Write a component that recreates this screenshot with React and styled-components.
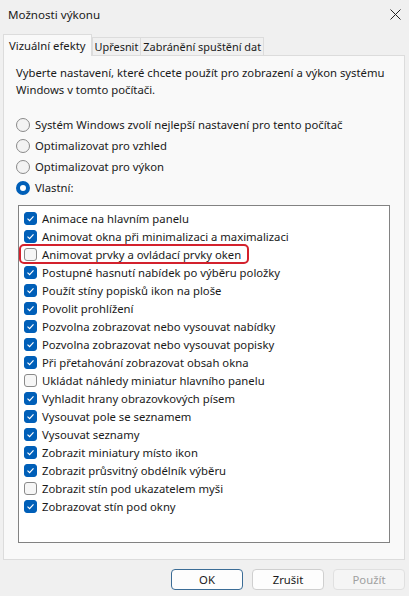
import React from 'react'
import styled, { createGlobalStyle } from 'styled-components'

const GlobalStyle = createGlobalStyle`
  html, body {
    margin: 0;
    padding: 0;
    background: #f0f0f0;
  }
  body {
    font-family: "Noto Sans", "Open Sans", sans-serif;
    font-size: 11.3px;
    color: #1a1a1a;
  }
`

const Window = styled.div`
  width: 409px;
  height: 596px;
  background: #f0f0f0;
  display: flex;
  flex-direction: column;
  box-sizing: border-box;
`

const TitleBar = styled.div`
  height: 29px;
  display: flex;
  align-items: center;
  justify-content: space-between;
  padding: 0 6px 0 8px;
  font-size: 11.6px;
`

const Close = styled.div`
  width: 16px;
  height: 16px;
  display: flex;
  align-items: center;
  justify-content: center;
`

const Tabs = styled.div`
  display: flex;
  align-items: flex-end;
  height: 26px;
  padding-left: 3px;
`

const Tab = styled.div`
  height: ${p => (p.active ? '21px' : '17px')};
  padding: 0 ${p => (p.active ? '5px' : '2px')};
  display: flex;
  align-items: center;
  background: ${p => (p.active ? '#f9f9f9' : '#f0f0f0')};
  border: 1px solid #dcdcdc;
  border-bottom: none;
  margin-right: ${p => (p.active ? '0' : '-1px')};
  position: relative;
  z-index: ${p => (p.active ? 2 : 1)};
  margin-bottom: ${p => (p.active ? '-1px' : '0')};
  white-space: nowrap;
  font-size: ${p => (p.active ? '11.3px' : '10.9px')};
`

const Panel = styled.div`
  margin: 0 4px 0 3px;
  height: 505px;
  background: #f9f9f9;
  border: 1px solid #dcdcdc;
  box-sizing: border-box;
  padding: 8px 13px 0 12px;
  display: flex;
  flex-direction: column;
`

const Intro = styled.p`
  margin: 0;
  line-height: 17px;
`

const RadioGroup = styled.div`
  margin-top: 18px;
  display: flex;
  flex-direction: column;
  gap: 4px;
`

const RadioRow = styled.div`
  display: flex;
  align-items: center;
  height: 17px;
  gap: 5px;
`

const RadioDot = styled.span`
  width: 14px;
  height: 14px;
  border-radius: 50%;
  box-sizing: border-box;
  flex-shrink: 0;
  border: ${p => (p.checked ? '4px solid #005fb8' : '1px solid #8a8a8a')};
  background: ${p => (p.checked ? '#fff' : '#f3f3f3')};
`

const ListBox = styled.div`
  margin: 9px 1px 0 2px;
  height: 338px;
  background: #fff;
  border: 1px solid #828282;
  box-sizing: border-box;
  padding: 3px 0 0 5px;
  display: flex;
  flex-direction: column;
`

const Item = styled.div`
  display: flex;
  align-items: center;
  height: 18px;
  gap: 5px;
  position: relative;
`

const Highlight = styled.span`
  position: absolute;
  left: -5px;
  top: -1px;
  width: 230px;
  height: 20px;
  border: 2px solid #d3212d;
  border-radius: 5px;
  box-sizing: border-box;
`

const Box = styled.span`
  width: 13px;
  height: 13px;
  border-radius: 3px;
  box-sizing: border-box;
  flex-shrink: 0;
  display: flex;
  align-items: center;
  justify-content: center;
  background: ${p => (p.checked ? '#005fb8' : '#f6f6f6')};
  border: 1px solid ${p => (p.checked ? '#005fb8' : '#8a8a8a')};
`

const Footer = styled.div`
  flex: 1;
  display: flex;
  justify-content: flex-end;
  align-items: center;
  gap: 9px;
  padding: 3px 4px 0 0;
`

const Button = styled.button`
  width: 72px;
  height: 21px;
  font-family: inherit;
  font-size: 11.3px;
  border-radius: 4px;
  background: ${p => (p.disabled ? '#f5f5f5' : '#fdfdfd')};
  color: ${p => (p.disabled ? '#a0a0a0' : '#1a1a1a')};
  border: 1px solid ${p => (p.primary ? '#3b6c96' : p.disabled ? '#e0e0e0' : '#cfcfcf')};
  padding: 0;
`

const items = [
  ['Animace na hlavním panelu', true],
  ['Animovat okna při minimalizaci a maximalizaci', true],
  ['Animovat prvky a ovládací prvky oken', false, true],
  ['Postupné hasnutí nabídek po výběru položky', true],
  ['Použít stíny popisků ikon na ploše', true],
  ['Povolit prohlížení', true],
  ['Pozvolna zobrazovat nebo vysouvat nabídky', true],
  ['Pozvolna zobrazovat nebo vysouvat popisky', true],
  ['Při přetahování zobrazovat obsah okna', true],
  ['Ukládat náhledy miniatur hlavního panelu', false],
  ['Vyhladit hrany obrazovkových písem', true],
  ['Vysouvat pole se seznamem', true],
  ['Vysouvat seznamy', true],
  ['Zobrazit miniatury místo ikon', true],
  ['Zobrazit průsvitný obdélník výběru', true],
  ['Zobrazit stín pod ukazatelem myši', false],
  ['Zobrazovat stín pod okny', true],
]

const radios = [
  ['Systém Windows zvolí nejlepší nastavení pro tento počítač', false],
  ['Optimalizovat pro vzhled', false],
  ['Optimalizovat pro výkon', false],
  ['Vlastní:', true],
]

const Check = () => (
  <svg width="9" height="9" viewBox="0 0 9 9">
    <path d="M1.5 4.6 L3.6 6.6 L7.5 2.4" fill="none" stroke="#fff" strokeWidth="1.2" />
  </svg>
)

const App = () => (
  <Window>
    <GlobalStyle />
    <TitleBar>
      <span>Možnosti výkonu</span>
      <Close>
        <svg width="11" height="11" viewBox="0 0 11 11">
          <path d="M0.5 0.5 L10.5 10.5 M10.5 0.5 L0.5 10.5" stroke="#222" strokeWidth="1" />
        </svg>
      </Close>
    </TitleBar>
    <Tabs>
      <Tab active>Vizuální efekty</Tab>
      <Tab>Upřesnit</Tab>
      <Tab>Zabránění spuštění dat</Tab>
    </Tabs>
    <Panel>
      <Intro>
        Vyberte nastavení, které chcete použít pro zobrazení a výkon systému
        Windows v tomto počítači.
      </Intro>
      <RadioGroup>
        {radios.map(([label, checked]) => (
          <RadioRow key={label}>
            <RadioDot checked={checked} />
            <span>{label}</span>
          </RadioRow>
        ))}
      </RadioGroup>
      <ListBox>
        {items.map(([label, checked, marked]) => (
          <Item key={label}>
            {marked && <Highlight />}
            <Box checked={checked}>{checked && <Check />}</Box>
            <span>{label}</span>
          </Item>
        ))}
      </ListBox>
    </Panel>
    <Footer>
      <Button primary>OK</Button>
      <Button>Zrušit</Button>
      <Button disabled>Použít</Button>
    </Footer>
  </Window>
)

export default App
